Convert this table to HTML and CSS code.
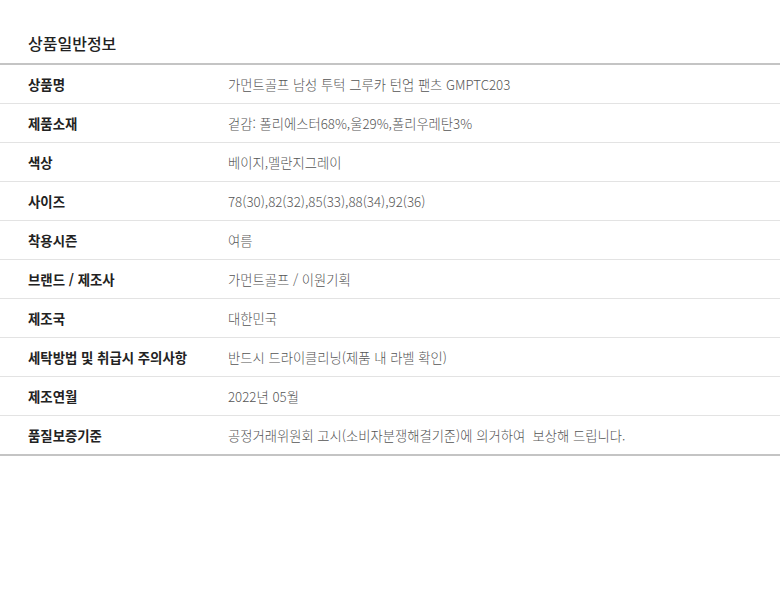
FILE: index.html
```html
<!DOCTYPE html>
<html lang="ko">
<head>
<meta charset="utf-8">
<link rel="stylesheet" href="styles.css">
</head>
<body>
<div class="info">
  <h2 class="title">상품일반정보</h2>
  <div class="table">
    <div class="row"><div class="label">상품명</div><div class="value">가먼트골프 남성 투턱 그루카 턴업 팬츠 GMPTC203</div></div>
    <div class="row"><div class="label">제품소재</div><div class="value">겉감: 폴리에스터68%,울29%,폴리우레탄3%</div></div>
    <div class="row"><div class="label">색상</div><div class="value">베이지,멜란지그레이</div></div>
    <div class="row"><div class="label">사이즈</div><div class="value">78(30),82(32),85(33),88(34),92(36)</div></div>
    <div class="row"><div class="label">착용시즌</div><div class="value">여름</div></div>
    <div class="row"><div class="label">브랜드 / 제조사</div><div class="value">가먼트골프 / 이원기획</div></div>
    <div class="row"><div class="label">제조국</div><div class="value">대한민국</div></div>
    <div class="row"><div class="label">세탁방법 및 취급시 주의사항</div><div class="value">반드시 드라이클리닝(제품 내 라벨 확인)</div></div>
    <div class="row"><div class="label">제조연월</div><div class="value">2022년 05월</div></div>
    <div class="row"><div class="label">품질보증기준</div><div class="value">공정거래위원회 고시(소비자분쟁해결기준)에 의거하여&nbsp; 보상해 드립니다.</div></div>
  </div>
</div>
</body>
</html>
```
FILE: styles.css
```css
html, body {
  margin: 0;
  padding: 0;
  background: #fff;
}
body {
  font-family: "Noto Sans CJK KR", "Noto Sans", sans-serif;
  color: #222;
}
.info {
  width: 780px;
}
.title {
  margin: 0;
  height: 63px;
  box-sizing: border-box;
  padding: 31px 0 0 28px;
  font-size: 16px;
  font-weight: 500;
  line-height: 24px;
  color: #222;
}
.table {
  border-top: 2px solid #c4c4c4;
  border-bottom: 2px solid #c4c4c4;
}
.row {
  display: flex;
  align-items: center;
  height: 38px;
  border-bottom: 1px solid #e3e3e3;
}
.row:last-child {
  border-bottom: none;
}
.label {
  width: 228px;
  flex: none;
  box-sizing: border-box;
  padding-left: 28px;
  font-size: 13.4px;
  font-weight: 700;
  color: #222;
}
.value {
  font-size: 13.3px;
  font-weight: 300;
  color: #555;
}
```
